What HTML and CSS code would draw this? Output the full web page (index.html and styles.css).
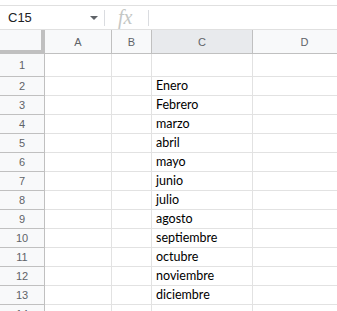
FILE: index.html
```html
<!DOCTYPE html>
<html>
<head>
  <title>Hoja de cálculo</title>
  <link rel="stylesheet" href="styles.css">
</head>
<body>
  <div class="top-strip"></div>

  <div class="formula-bar">
    <div class="name-box">
      <span class="cell-ref">C15</span>
      <span class="caret"></span>
    </div>
    <div class="sep"></div>
    <div class="fx">fx</div>
    <div class="sep"></div>
    <div class="formula-input"></div>
  </div>

  <div class="viewport">
  <div class="sheet">
    <div class="corner"></div>
    <div class="col-head">A</div>
    <div class="col-head">B</div>
    <div class="col-head selected">C</div>
    <div class="col-head">D</div>

    <div class="row-head first">1</div>
    <div class="cell first"></div>
    <div class="cell first"></div>
    <div class="cell first"></div>
    <div class="cell first"></div>

    <div class="row-head">2</div>
    <div class="cell"></div><div class="cell"></div><div class="cell">Enero</div><div class="cell"></div>
    <div class="row-head">3</div>
    <div class="cell"></div><div class="cell"></div><div class="cell">Febrero</div><div class="cell"></div>
    <div class="row-head">4</div>
    <div class="cell"></div><div class="cell"></div><div class="cell">marzo</div><div class="cell"></div>
    <div class="row-head">5</div>
    <div class="cell"></div><div class="cell"></div><div class="cell">abril</div><div class="cell"></div>
    <div class="row-head">6</div>
    <div class="cell"></div><div class="cell"></div><div class="cell">mayo</div><div class="cell"></div>
    <div class="row-head">7</div>
    <div class="cell"></div><div class="cell"></div><div class="cell">junio</div><div class="cell"></div>
    <div class="row-head">8</div>
    <div class="cell"></div><div class="cell"></div><div class="cell">julio</div><div class="cell"></div>
    <div class="row-head">9</div>
    <div class="cell"></div><div class="cell"></div><div class="cell">agosto</div><div class="cell"></div>
    <div class="row-head">10</div>
    <div class="cell"></div><div class="cell"></div><div class="cell">septiembre</div><div class="cell"></div>
    <div class="row-head">11</div>
    <div class="cell"></div><div class="cell"></div><div class="cell">octubre</div><div class="cell"></div>
    <div class="row-head">12</div>
    <div class="cell"></div><div class="cell"></div><div class="cell">noviembre</div><div class="cell"></div>
    <div class="row-head">13</div>
    <div class="cell"></div><div class="cell"></div><div class="cell">diciembre</div><div class="cell"></div>
    <div class="row-head">14</div>
    <div class="cell"></div><div class="cell"></div><div class="cell"></div><div class="cell"></div>
  </div>
  </div>
</body>
</html>
```

FILE: styles.css
```css
body {
  margin: 0;
  overflow: hidden;
  background: #fff;
  font-family: Arial, "Liberation Sans", sans-serif;
}

.top-strip {
  height: 5px;
  border-bottom: 1px solid #e0e0e0;
}

.formula-bar {
  display: flex;
  align-items: center;
  height: 23px;
  border-bottom: 1px solid #e0e0e0;
}

.name-box {
  display: flex;
  align-items: center;
  justify-content: space-between;
  width: 90px;
  padding: 0 6px 0 8px;
}

.cell-ref {
  font-size: 13px;
  color: #202124;
}

.caret {
  width: 0;
  height: 0;
  border-left: 4px solid transparent;
  border-right: 4px solid transparent;
  border-top: 4px solid #5f6368;
}

.sep {
  width: 1px;
  height: 16px;
  background: #dadce0;
}

.fx {
  width: 43px;
  padding-left: 13px;
  box-sizing: border-box;
  font-family: "Liberation Serif", serif;
  font-style: italic;
  font-size: 20px;
  color: #c4c7c5;
}

.formula-input {
  flex: 1;
}

.viewport {
  width: 100%;
  overflow: hidden;
}

.sheet {
  display: grid;
  grid-template-columns: 45px 67px 40px 101px 104px;
  grid-template-rows: 24px 23px;
  grid-auto-rows: 19px;
  width: 357px;
}

.corner {
  background: #f8f9fa;
  border-right: 4px solid #c0c0c0;
  border-bottom: 4px solid #c0c0c0;
}

.col-head {
  display: flex;
  align-items: center;
  justify-content: center;
  background: #f8f9fa;
  border-right: 1px solid #c0c0c0;
  border-bottom: 1px solid #c0c0c0;
  font-size: 11px;
  color: #5f6368;
}

.col-head.selected {
  background: #e8eaed;
}

.row-head {
  display: flex;
  align-items: center;
  justify-content: center;
  background: #f8f9fa;
  border-right: 1px solid #c0c0c0;
  border-bottom: 1px solid #c0c0c0;
  font-size: 11px;
  color: #5f6368;
}

.cell {
  display: flex;
  align-items: flex-end;
  padding: 0 0 2px 4px;
  border-right: 1px solid #e2e2e2;
  border-bottom: 1px solid #e2e2e2;
  font-family: Lato, "Open Sans", sans-serif;
  font-size: 12.5px;
  color: #000;
  white-space: nowrap;
}

.sheet > div {
  box-sizing: border-box;
}
```
